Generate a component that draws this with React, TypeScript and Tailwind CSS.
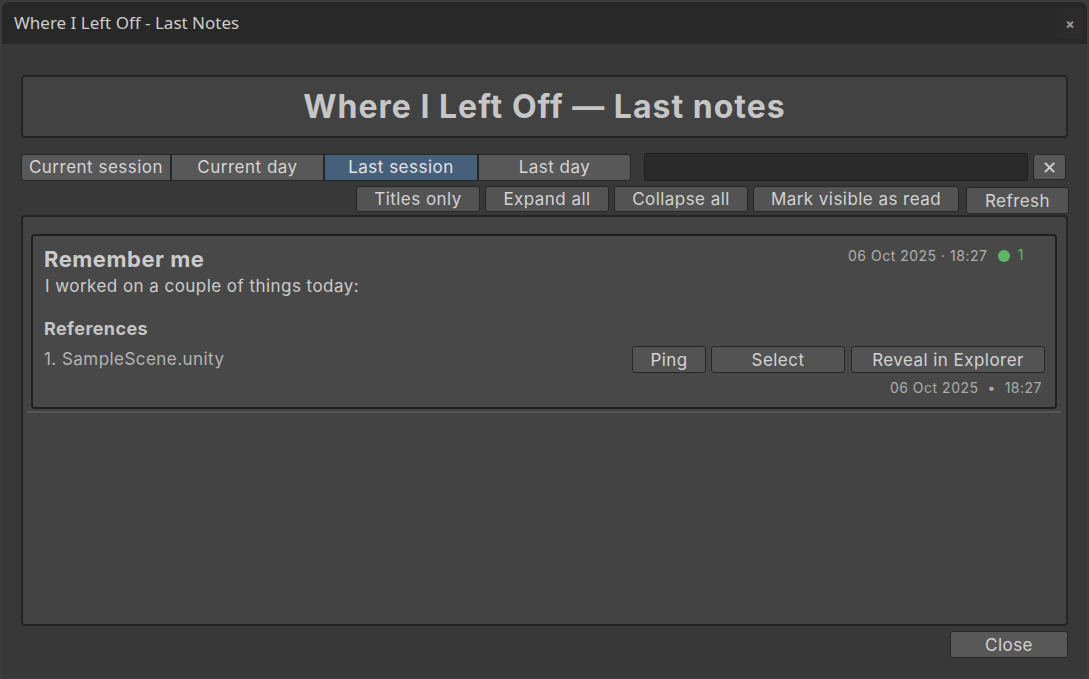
import React from "react";

const TABS = [
  { label: "Current session", w: "w-[150px]", active: false },
  { label: "Current day", w: "w-[153px]", active: false },
  { label: "Last session", w: "w-[154px]", active: true },
  { label: "Last day", w: "w-[153px]", active: false },
];

const ACTIONS = [
  { label: "Titles only", w: "w-[124px]" },
  { label: "Expand all", w: "w-[124px]" },
  { label: "Collapse all", w: "w-[134px]" },
  { label: "Mark visible as read", w: "w-[206px]" },
];

function Btn({ label, className = "" }: { label: string; className?: string }) {
  return (
    <div
      className={`flex items-center justify-center rounded-[3px] border border-[#272727] bg-[#535353] pt-[1px] text-[17px] leading-none tracking-[0.45px] text-[#d2d2d2] ${className}`}
    >
      {label}
    </div>
  );
}

export default function App() {
  return (
    <div
      className="h-[679px] w-[1089px] bg-[#3c3c3c] p-[2px]"
      style={{ fontFamily: "Inter, 'Noto Sans', sans-serif" }}
    >
      <div className="flex h-full flex-col overflow-hidden rounded-t-[7px] rounded-b-[5px] bg-[#383838]">
        {/* title bar */}
        <div className="flex h-[42px] shrink-0 items-center justify-between bg-[#282828] pl-[12px] pr-[4px]">
          <span
            className="text-[17px] text-[#cdcdcd]"
            style={{ fontFamily: "'Noto Sans', 'Open Sans', sans-serif" }}
          >
            Where I Left Off - Last Notes
          </span>
          <div className="flex h-[30px] w-[26px] items-center justify-center bg-[#2c2c2c] text-[14px] font-bold text-[#9a9a9a]">
            ×
          </div>
        </div>

        <div className="flex flex-1 flex-col px-[19px] pt-[31px]">
          {/* header */}
          <div className="flex h-[63px] items-center justify-center rounded-[4px] border-2 border-[#242424] bg-[#424242] text-[32px] font-bold tracking-[1px] text-[#c6c6c6]">
            Where I Left Off — Last notes
          </div>

          {/* tabs + search */}
          <div className="mt-[15px] flex h-[28px] items-center">
            <div className="flex h-[27px]">
              {TABS.map((t, i) => (
                <div
                  key={t.label}
                  className={`flex ${t.w} items-center justify-center border border-[#262626] pt-[1px] text-[17px] leading-none tracking-[0.5px] ${
                    t.active ? "bg-[#46607c] text-[#e2e2e2]" : "bg-[#585858] text-[#d4d4d4]"
                  } ${i === 0 ? "rounded-l-[3px]" : ""} ${i === TABS.length - 1 ? "rounded-r-[3px]" : ""}`}
                >
                  {t.label}
                </div>
              ))}
            </div>
            <div className="ml-[13px] h-[28px] w-[384px] rounded-[3px] border border-[#1e1e1e] bg-[#2a2a2a]" />
            <Btn label="✕" className="ml-[5px] h-[26px] w-[33px] bg-[#575757] text-[18px]" />
          </div>

          {/* action buttons */}
          <div className="mt-[5px] flex h-[27px] items-start justify-end gap-[5px]">
            {ACTIONS.map((a) => (
              <Btn key={a.label} label={a.label} className={`h-[26px] ${a.w}`} />
            ))}
            <Btn label="Refresh" className="ml-[2px] mr-[-1px] mt-[1px] h-[27px] w-[103px]" />
          </div>

          {/* list */}
          <div className="mt-[2px] flex h-[411px] flex-col rounded-[4px] border-2 border-[#242424] bg-[#424242] pl-[8px] pr-[9px] pt-[17px]">
            <div className="flex h-[175px] flex-col rounded-[4px] border-2 border-[#1f1f1f] bg-[#484848] pl-[11px] pr-[10px] pt-[10px]">
              <div className="flex h-[26px] items-center justify-between">
                <span className="text-[22px] font-bold tracking-[0.5px] text-[#cbcbcb]">Remember me</span>
                <div className="mr-[21px] -mt-[7px] flex items-center text-[14px] tracking-[0.5px] text-[#b0b0b0]">
                  <span>06 Oct 2025 · 18:27</span>
                  <span className="ml-[11px] h-[12px] w-[12px] rounded-full bg-[#5fb664]" />
                  <span className="ml-[7px] text-[15px] text-[#5fb664]">1</span>
                </div>
              </div>
              <div className="mt-[3px] flex h-[24px] items-center pl-[1px] text-[17px] tracking-[0.45px] text-[#cbcbcb]">
                I worked on a couple of things today:
              </div>
              <div className="mt-[17px] flex h-[24px] items-center text-[18px] font-bold tracking-[0.4px] text-[#c4c4c4]">
                References
              </div>
              <div className="mt-[6px] flex h-[27px] items-center justify-between">
                <span className="pt-[1px] text-[17px] tracking-[0.45px] text-[#b4b4b4]">1. SampleScene.unity</span>
                <div className="flex h-[27px] gap-[5px]">
                  <Btn label="Ping" className="w-[74px]" />
                  <Btn label="Select" className="w-[134px]" />
                  <Btn label="Reveal in Explorer" className="ml-[1px] w-[194px]" />
                </div>
              </div>
              <div className="mt-[3px] flex h-[22px] items-center justify-end pr-[3px] text-[14px] tracking-[0.5px] text-[#ababab]">
                06 Oct 2025 &nbsp;•&nbsp; 18:27
              </div>
            </div>
            <div className="mx-[-4px] mt-[2px] h-[2px] bg-[#555555]" />
          </div>

          {/* footer */}
          <div className="mt-[5px] flex justify-end">
            <Btn label="Close" className="h-[27px] w-[118px] bg-[#585858]" />
          </div>
        </div>
      </div>
    </div>
  );
}
